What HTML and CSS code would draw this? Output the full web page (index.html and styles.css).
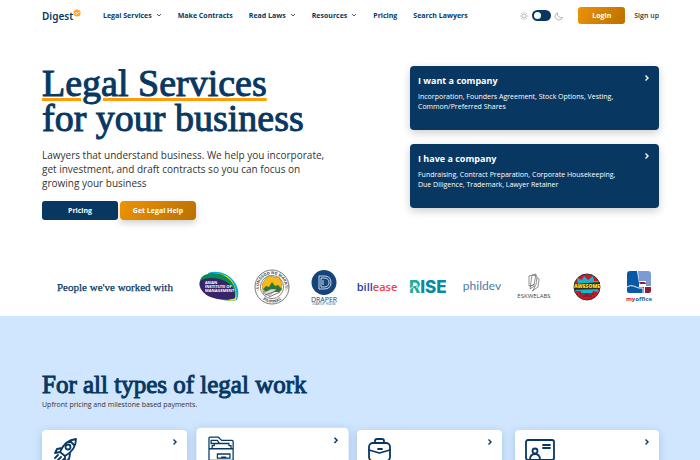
FILE: index.html
```html
<!DOCTYPE html>
<html lang="en">
<head>
<meta charset="utf-8">
<meta name="viewport" content="width=device-width, initial-scale=1">
<title>Digest</title>
<link rel="stylesheet" href="styles.css">
</head>
<body>
<svg class="defs" aria-hidden="true">
  <symbol id="right" viewBox="0 0 6 8"><path d="M1.5 1.5 4 4 1.5 6.5" fill="none" stroke="currentColor" stroke-width="1.4"/></symbol>
  <symbol id="down" viewBox="0 0 6 4"><path d="M1 1 3 3 5 1" fill="none" stroke="currentColor" stroke-width=".8"/></symbol>
</svg>
<header class="header">
  <a class="brand" href="#">Digest<svg class="brand-mark" viewBox="0 0 8 8" aria-hidden="true"><circle cx="4" cy="4" r="3.6" fill="#ffa62b"/><path d="M1.4 4.3 3 3.4l1.4.8L6.8 3M2.4 5.5l2-.8" fill="none" stroke="#fff" stroke-width=".7"/></svg></a>
  <nav class="nav">
    <a href="#">Legal Services<svg class="down"><use href="#down"/></svg></a>
    <a href="#">Make Contracts</a>
    <a href="#">Read Laws<svg class="down"><use href="#down"/></svg></a>
    <a href="#">Resources<svg class="down"><use href="#down"/></svg></a>
    <a href="#">Pricing</a>
    <a href="#">Search Lawyers</a>
  </nav>
  <div class="account">
    <label class="theme">
      <svg class="theme-icon" viewBox="0 0 10 10" aria-hidden="true"><circle cx="5" cy="5" r="2"/><path d="M5 .8v1.2M5 8v1.2M.8 5H2M8 5h1.2M2 2l.8.8M7.2 7.2l.8.8M2 8l.8-.8M7.2 2.8 8 2"/></svg>
      <input class="switch" type="checkbox" role="switch" aria-label="Dark mode">
      <svg class="theme-icon" viewBox="0 0 10 10" aria-hidden="true"><path d="M3.600 1.800A3.700 3.700 0 1 0 8.400 6.400 3.700 3.700 0 0 1 3.600 1.800Z"/></svg>
    </label>
    <button class="button gold login">Login</button>
    <a class="signup" href="#">Sign up</a>
  </div>
</header>
<main>
  <section class="hero">
    <div>
      <h1 class="title"><span class="underlined">Legal Services</span><br>for your business</h1>
      <p class="lead">Lawyers that understand business. We help you incorporate, get investment, and draft contracts so you can focus on growing your business</p>
      <div class="actions">
        <button class="button navy">Pricing</button>
        <button class="button gold raised">Get Legal Help</button>
      </div>
    </div>
    <div class="offers">
      <a class="offer" href="#">
        <h2 class="offer-title">I want a company</h2>
        <p class="offer-text">Incorporation, Founders Agreement, Stock Options, Vesting, Common/Preferred Shares</p>
        <svg class="right"><use href="#right"/></svg>
      </a>
      <a class="offer" href="#">
        <h2 class="offer-title">I have a company</h2>
        <p class="offer-text">Fundraising, Contract Preparation, Corporate Housekeeping, Due Diligence, Trademark, Lawyer Retainer</p>
        <svg class="right"><use href="#right"/></svg>
      </a>
    </div>
  </section>
  <section class="clients">
    <h2 class="clients-title">People we've worked with</h2>
    <div class="logos">
      <svg class="logo" viewBox="0 0 40 40" role="img" aria-label="Asian Institute of Management">
        <path d="M9 6C17 3 28 6 33 12c6 6 8 14 5 21-6 2-13 1-18-2Z" fill="#00aee6"/>
        <path d="M11 7c10-2 18 1 22 7 4 7 5 12 4 19-6 2-13 0-19-4Z" fill="#ffdf00"/>
        <path d="M2 11c4-6 17-6 24-2 8 5 12 13 10 22-7 3-19 1-26-4C3 22-1 16 2 11Z" fill="#078b50"/>
        <path d="M1 14c5-4 17-4 25 0 7 4 11 10 10 17-7 3-19 2-27-2C2 25-1 18 1 14Z" fill="#382567"/>
        <g class="bold" fill="#fff" font-size="4"><text x="6" y="17">ASIAN</text><text x="6" y="21">INSTITUTE OF</text><text x="6" y="25">MANAGEMENT</text></g>
      </svg>
      <svg class="logo" viewBox="0 0 40 40" role="img" aria-label="Lungsod ng Makati, Pilipinas">
        <circle cx="20" cy="20" r="17" fill="#fff" stroke="#555" stroke-width=".8"/>
        <circle cx="20" cy="20" r="11.6" fill="#fff" stroke="#555" stroke-width=".7"/>
        <path id="ring-top" d="M7.2 24A13.3 13.3 0 1 1 32.8 24" fill="none"/>
        <path id="ring-bottom" d="M8 30A15.6 15.6 0 0 0 32 30" fill="none"/>
        <g class="bold" fill="#444" font-size="4" text-anchor="middle"><text><textPath href="#ring-top" startOffset="50%">LUNGSOD NG MAKATI</textPath></text><text><textPath href="#ring-bottom" startOffset="50%">PILIPINAS</textPath></text></g>
        <path d="m10 17 4-6 3-2 5 1 5 0 3 7-1 7-18 1Z" fill="#f8b91b" stroke="#99731b" stroke-width=".5"/>
        <path d="m11 22 3-3 3 1 3-5 3 4 3-1 4 4-3 3-14-1Z" fill="#267b36"/>
        <path d="m11 26 8-4h6l-8 7Z" fill="#ddd" stroke="#555" stroke-width=".5"/><path d="m13 28 14-5M17 30l11-5" stroke="#555" stroke-width=".8"/>
        <circle cx="6" cy="23" r=".8" fill="#f8b91b"/><circle cx="34" cy="23" r=".8" fill="#f8b91b"/>
      </svg>
      <svg class="logo" viewBox="0 0 40 40" role="img" aria-label="Draper Startup House">
        <circle cx="20" cy="15.500" r="12.500" fill="#16457b"/>
        <path d="M15 9h5q7 0 7 6.500T20 22h-5ZM17 11v9M17 11h3q5 0 5 4.500T20 20h-3M19 13v5" fill="none" stroke="#dce8f4" stroke-width=".9"/>
        <g fill="#16457b" text-anchor="middle"><text x="20" y="35" font-size="7">DRAPER</text><text x="20" y="38" font-size="3">STARTUP HOUSE</text></g>
      </svg>
      <svg class="logo" viewBox="0 0 40 40" role="img" aria-label="billease"><text class="semi" x="20" y="24" text-anchor="middle" font-size="11" fill="#283ca0">bill<tspan fill="#ee4149">ease</tspan></text></svg>
      <svg class="logo" viewBox="0 0 40 40" role="img" aria-label="Rise">
        <text class="rise" x="0" y="26" font-size="17" fill="#078aa6"><tspan fill="#1fae98">R</tspan>ISE</text>
        <path d="M0 23 7 17M4 17h4v4" fill="none" stroke="#fff"/>
      </svg>
      <svg class="logo" viewBox="0 0 40 40" role="img" aria-label="phildev"><text class="round" x="20" y="23" text-anchor="middle" font-size="12" fill="#4b7ca6">phildev</text></svg>
      <svg class="logo" viewBox="0 0 40 40" role="img" aria-label="Eskwelabs">
        <path d="m15 9 7-2-2 11-5 1ZM18 8l5 1-1 9-6 4ZM23 11l2 1-1 8-6 4M16 20l4-3M19 24l2-5" fill="none" stroke="#666" stroke-width=".7"/>
        <text x="20" y="31" text-anchor="middle" font-size="6" fill="#444">ESKWELABS</text>
      </svg>
      <svg class="logo" viewBox="0 0 40 40" role="img" aria-label="Awesome">
        <circle cx="20" cy="20" r="13" fill="#df1020" stroke="#283943"/>
        <path d="m10 11 5 2 2-4 4 4 5-4 1 5 5 0-3 5 3 6-6-1-2 5-4-3-5 3-1-5-6 0 3-5Z" fill="#18b5cf"/>
        <path d="m7 17 26-2 0 7-26 1Z" fill="#342a18"/><text class="heavy" x="20" y="21" text-anchor="middle" font-size="5" fill="#ffe223">AWESOME</text><path d="M13 27h14M15 29h10" stroke="#70232b" stroke-width="1.500"/>
      </svg>
      <svg class="logo" viewBox="0 0 40 40" role="img" aria-label="myoffice">
        <path d="M11 4h7l2 12v4h5v6H10q-2 0-2-2V7q0-3 3-3Z" fill="#0759a5"/>
        <path d="M19 4h10q3 0 3 3v12h-5v-5h-7Z" fill="#7b9cd3"/>
        <path d="M20 15h5q2 0 2 2h-6Z" fill="#8f1d36"/>
        <path d="M8 20c5-3 8 0 12 1h4v5" fill="none" stroke="#fff"/>
        <path d="M26 20h6v4q0 2-2 2h-4Z" fill="#8f1d36"/>
        <text class="bold" x="20" y="34" text-anchor="middle" font-size="6" fill="#c9253b">my<tspan fill="#1763a8">office</tspan></text>
      </svg>
    </div>
  </section>
  <section class="work">
    <h2 class="work-title">For all types of legal work</h2>
    <p class="work-text">Upfront pricing and milestone based payments.</p>
    <div class="cards">
      <a class="card" href="#" aria-label="Startups">
        <svg class="card-icon" viewBox="0 0 28 28"><path d="M8 15Q13 3 24 2q0 11-11 17ZM10 11l-5 1-2 4 5-1M18 17l-1 5-4 3v-6M8 15l5 4M18 4l4 4M6 18l-3 3M9 20l-4 4M12 22l-3 3"/><circle cx="16" cy="10" r="2.500"/></svg>
        <svg class="right"><use href="#right"/></svg>
      </a>
      <a class="card active" href="#" aria-label="Documents">
        <svg class="card-icon thin" viewBox="0 0 28 28"><path d="M2 24V3q0-1 1-1h8l3 3h10q1 0 1 1v18ZM4 5h6l2 3H4ZM2 13h23M5 13v-3h2V8h14v2h2v3M10 18h12v4H10ZM14 21h4"/></svg>
        <svg class="right"><use href="#right"/></svg>
      </a>
      <a class="card" href="#" aria-label="Employment">
        <svg class="card-icon" viewBox="0 0 28 28"><rect x="2" y="6" width="21" height="18" rx="4"/><path d="M8 6V4q0-2 2-2h5q2 0 2 2v2M2 13l10.500 3L23 13M11 12h4"/></svg>
        <svg class="right"><use href="#right"/></svg>
      </a>
      <a class="card" href="#" aria-label="Immigration">
        <svg class="card-icon wide" viewBox="0 0 30 28"><rect x="1" y="3" width="28" height="20" rx="2"/><circle cx="10" cy="14" r="2.500"/><path d="M5 23q0-6 5-6t5 6M18 8h7M18 11h7"/></svg>
        <svg class="right"><use href="#right"/></svg>
      </a>
    </div>
  </section>
</main>
</body>
</html>
```
FILE: styles.css
```css
* { box-sizing: border-box; }
html { scrollbar-width: none; }
body { margin: 0; background: #fff; color: #333; font-family: "Open Sans", "Noto Sans", sans-serif; font-size: 8px; }
h1, h2, p { margin: 0; }
a { color: inherit; text-decoration: none; }
button { font: inherit; cursor: pointer; }
.defs { display: none; }

.header { display: flex; align-items: center; height: 31px; padding: 0 41px 0 42px; color: #083862; }
.brand { display: flex; width: 61px; font: 600 10px/14px "Noto Sans", sans-serif; }
.brand-mark { width: 8px; height: 8px; }
.nav { display: flex; gap: 16px; font-size: 7px; font-weight: 700; line-height: 12px; white-space: nowrap; }
.down { width: 6px; height: 4px; margin: 0 0 1px 4px; }
.account { display: flex; align-items: center; margin-left: auto; }
.theme { display: flex; align-items: center; gap: 3px; margin-right: 14px; }
.theme-icon { width: 10px; height: 10px; fill: none; stroke: #999; stroke-width: .7; }
.switch { appearance: none; width: 19px; height: 11px; margin: 0; padding: 2px; border-radius: 6px; background: #083862; }
.switch::before { content: ""; display: block; width: 7px; height: 7px; border-radius: 50%; background: #fff; }
.switch:checked::before { margin-left: auto; }
.button { width: 76px; height: 19px; padding: 0; border: 0; border-radius: 3px; color: #fff; font: 700 7px/10px "Open Sans", sans-serif; }
.navy { background: #083862; }
.gold { background: linear-gradient(120deg, #ed9206, #bb7000); }
.raised { border-radius: 4px; box-shadow: 0 3px 7px #0003; }
.login { width: 47px; height: 17px; }
.signup { margin-left: 9px; color: #333; font-size: 7px; font-weight: 600; }

.hero { display: grid; grid-template-columns: 1fr 249px; align-items: start; padding: 35px 41px 0 42px; }
.title { color: #083862; font: 400 38px/35px "Liberation Serif", serif; -webkit-text-stroke: 1px #083862; }
.underlined { text-decoration: underline 3px #ff9c08; text-underline-offset: 2px; }
.lead { max-width: 288px; margin-top: 12px; font-size: 10px; line-height: 14px; }
.actions { display: flex; gap: 2px; margin-top: 11px; }
.offers { display: grid; gap: 14px; }
.offer { position: relative; min-height: 64px; padding: 8px; border-radius: 4px; background: #083862; color: #fff; box-shadow: 0 3px 8px #0003; }
.offer-title { font-size: 9px; line-height: 14px; }
.offer-text { max-width: 208px; margin-top: 4px; font-size: 7px; line-height: 10px; }
.right { position: absolute; top: 8px; right: 9px; width: 6px; height: 8px; }

.clients { display: flex; align-items: center; justify-content: space-between; margin-top: 47px; padding: 0 41px 0 57px; }
.clients-title { color: #083862; font: 400 11px/16px "Liberation Serif", serif; -webkit-text-stroke: 0.25px #083862; }
.logos { display: flex; justify-content: space-between; flex: 0 1 460px; }
.logo { width: 40px; height: 40px; overflow: visible; font-family: "Open Sans", sans-serif; }
.bold { font-weight: 700; }
.semi { font-weight: 600; }
.heavy { font-weight: 800; }
.rise { font-family: Inter, sans-serif; font-weight: 800; }
.round { font-family: Lato, sans-serif; }

.work { margin-top: 9px; padding: 54px 41px 40px 42px; background: #d0e6ff; }
.work-title { color: #083862; font: 400 25px/30px "Liberation Serif", serif; -webkit-text-stroke: 1px #083862; }
.work-text { font-size: 7px; line-height: 10px; }
.cards { display: grid; grid-template-columns: repeat(4, 1fr); gap: 13px; margin-top: 20px; }
.card { position: relative; min-height: 90px; padding: 7px 10px; border-radius: 4px; background: #fff; color: #083862; box-shadow: 0 2px 8px #08386233; }
.active { transform: scale(1.05); }
.card-icon { width: 28px; height: 28px; fill: none; stroke: currentColor; stroke-width: 1.8; stroke-linejoin: round; stroke-linecap: round; }
.thin { stroke-width: 1.2; }
.wide { width: 30px; }
```
